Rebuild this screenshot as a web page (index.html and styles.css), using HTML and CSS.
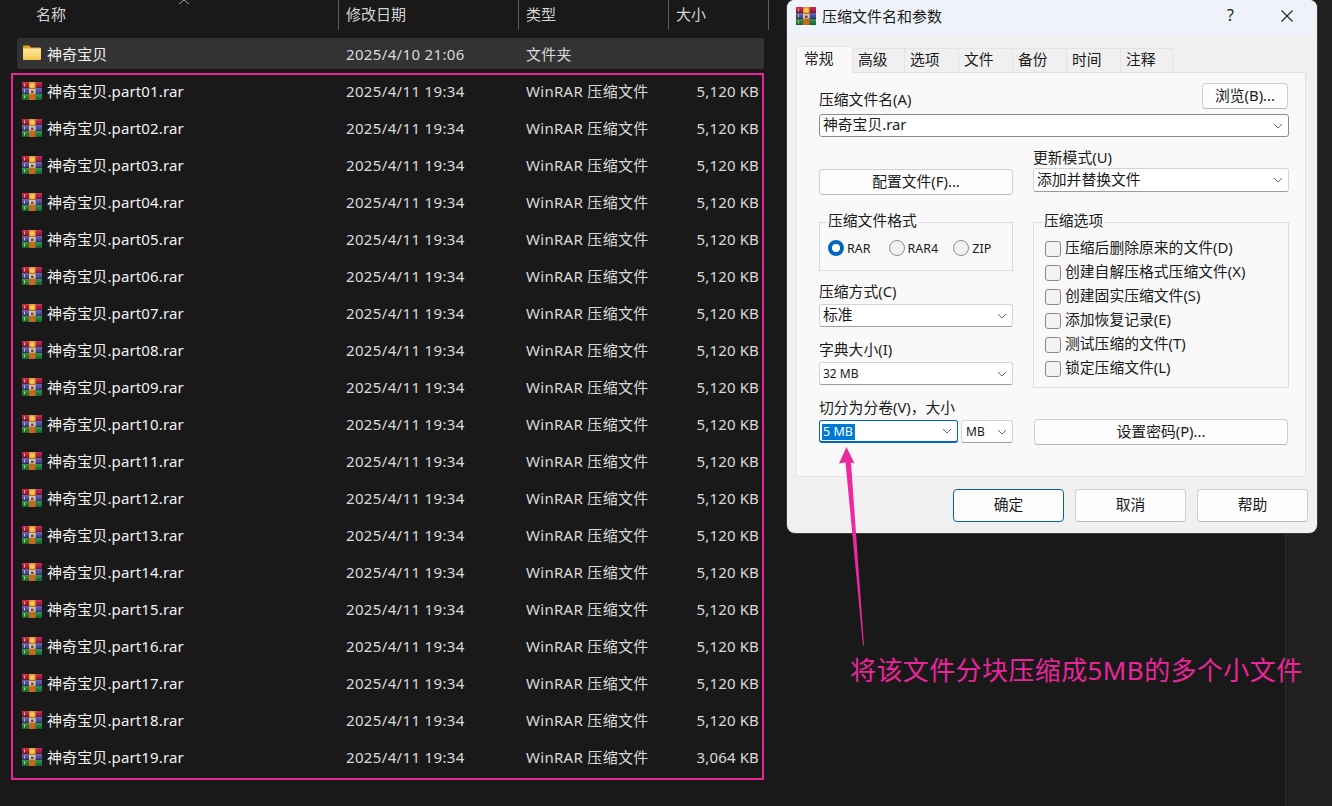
FILE: index.html
```html
<!DOCTYPE html>
<html lang="zh-CN">
<head>
    <meta charset="UTF-8">
    <title>压缩文件名和参数</title>
    <link rel="stylesheet" href="styles.css">
</head>
<body>

<svg class="defs" width="0" height="0">
    <defs>
        <linearGradient id="redBook" x1="0" y1="0" x2="0" y2="1"><stop offset="0" stop-color="#cf2c5a"/><stop offset="1" stop-color="#8a1638"/></linearGradient>
        <linearGradient id="blueBook" x1="0" y1="0" x2="0" y2="1"><stop offset="0" stop-color="#6664bc"/><stop offset="1" stop-color="#3c3a8c"/></linearGradient>
        <linearGradient id="greenBook" x1="0" y1="0" x2="0" y2="1"><stop offset="0" stop-color="#2f9a52"/><stop offset="1" stop-color="#13602e"/></linearGradient>
        <linearGradient id="folderBody" x1="0" y1="0" x2="0" y2="1"><stop offset="0" stop-color="#ffe9a6"/><stop offset="1" stop-color="#f7c64c"/></linearGradient>
        <symbol id="rar" viewBox="0 0 20 18">
            <rect x="0" y="0" width="20" height="18" fill="#222"/>
            <rect x="0" y="0" width="20" height="5.6" fill="url(#redBook)"/>
            <rect x="0" y="6" width="20" height="5.6" fill="url(#blueBook)"/>
            <rect x="0" y="12" width="20" height="6" fill="url(#greenBook)"/>
            <rect x="2" y="1.5" width="1" height="3" fill="#f2c230"/>
            <rect x="2" y="7.5" width="1" height="3" fill="#f2c230"/>
            <rect x="2" y="13.5" width="1" height="3" fill="#f2c230"/>
            <rect x="7" y="0" width="6.5" height="18" fill="#c8681e"/>
            <rect x="7" y="0" width="6.5" height="6" fill="#e09a28"/>
            <circle cx="10.2" cy="3.4" r="2.3" fill="#f6c860"/>
            <rect x="7" y="7" width="6.5" height="4.6" fill="#cfc8ba"/>
            <rect x="9" y="8.6" width="2.6" height="2.4" fill="#5a5048"/>
        </symbol>
        <symbol id="folder" viewBox="0 0 18 15">
            <path d="M0 1.5a1 1 0 0 1 1-1h5l2 2h9a1 1 0 0 1 1 1V4H0z" fill="#e5a21e"/>
            <path d="M0 3.6h17a1 1 0 0 1 1 1v9.4a1 1 0 0 1-1 1H1a1 1 0 0 1-1-1z" fill="url(#folderBody)"/>
        </symbol>
        <symbol id="chev" viewBox="0 0 10 6">
            <path d="M1 1l4 4 4-4" fill="none" stroke="#666" stroke-width="1"/>
        </symbol>
    </defs>
</svg>

<div class="desktop">
    <div class="explorer">
        <div class="col-head">
            <div class="col col-name">名称</div>
            <div class="col col-date">修改日期</div>
            <div class="col col-type">类型</div>
            <div class="col col-size">大小</div>
        </div>
        <svg class="sort-caret" width="12" height="5" viewBox="0 0 12 5"><path d="M1 5l5-4 5 4" fill="none" stroke="#9a9a9a"/></svg>

        <div class="row row-folder">
            <div class="name"><svg class="folder-icon"><use href="#folder"/></svg>神奇宝贝</div>
            <div>2025/4/10 21:06</div>
            <div>文件夹</div>
            <div></div>
        </div>

        <div class="files">
            <div class="row"><div class="name"><svg class="rar-icon"><use href="#rar"/></svg>神奇宝贝.part01.rar</div><div>2025/4/11 19:34</div><div>WinRAR 压缩文件</div><div>5,120 KB</div></div>
            <div class="row"><div class="name"><svg class="rar-icon"><use href="#rar"/></svg>神奇宝贝.part02.rar</div><div>2025/4/11 19:34</div><div>WinRAR 压缩文件</div><div>5,120 KB</div></div>
            <div class="row"><div class="name"><svg class="rar-icon"><use href="#rar"/></svg>神奇宝贝.part03.rar</div><div>2025/4/11 19:34</div><div>WinRAR 压缩文件</div><div>5,120 KB</div></div>
            <div class="row"><div class="name"><svg class="rar-icon"><use href="#rar"/></svg>神奇宝贝.part04.rar</div><div>2025/4/11 19:34</div><div>WinRAR 压缩文件</div><div>5,120 KB</div></div>
            <div class="row"><div class="name"><svg class="rar-icon"><use href="#rar"/></svg>神奇宝贝.part05.rar</div><div>2025/4/11 19:34</div><div>WinRAR 压缩文件</div><div>5,120 KB</div></div>
            <div class="row"><div class="name"><svg class="rar-icon"><use href="#rar"/></svg>神奇宝贝.part06.rar</div><div>2025/4/11 19:34</div><div>WinRAR 压缩文件</div><div>5,120 KB</div></div>
            <div class="row"><div class="name"><svg class="rar-icon"><use href="#rar"/></svg>神奇宝贝.part07.rar</div><div>2025/4/11 19:34</div><div>WinRAR 压缩文件</div><div>5,120 KB</div></div>
            <div class="row"><div class="name"><svg class="rar-icon"><use href="#rar"/></svg>神奇宝贝.part08.rar</div><div>2025/4/11 19:34</div><div>WinRAR 压缩文件</div><div>5,120 KB</div></div>
            <div class="row"><div class="name"><svg class="rar-icon"><use href="#rar"/></svg>神奇宝贝.part09.rar</div><div>2025/4/11 19:34</div><div>WinRAR 压缩文件</div><div>5,120 KB</div></div>
            <div class="row"><div class="name"><svg class="rar-icon"><use href="#rar"/></svg>神奇宝贝.part10.rar</div><div>2025/4/11 19:34</div><div>WinRAR 压缩文件</div><div>5,120 KB</div></div>
            <div class="row"><div class="name"><svg class="rar-icon"><use href="#rar"/></svg>神奇宝贝.part11.rar</div><div>2025/4/11 19:34</div><div>WinRAR 压缩文件</div><div>5,120 KB</div></div>
            <div class="row"><div class="name"><svg class="rar-icon"><use href="#rar"/></svg>神奇宝贝.part12.rar</div><div>2025/4/11 19:34</div><div>WinRAR 压缩文件</div><div>5,120 KB</div></div>
            <div class="row"><div class="name"><svg class="rar-icon"><use href="#rar"/></svg>神奇宝贝.part13.rar</div><div>2025/4/11 19:34</div><div>WinRAR 压缩文件</div><div>5,120 KB</div></div>
            <div class="row"><div class="name"><svg class="rar-icon"><use href="#rar"/></svg>神奇宝贝.part14.rar</div><div>2025/4/11 19:34</div><div>WinRAR 压缩文件</div><div>5,120 KB</div></div>
            <div class="row"><div class="name"><svg class="rar-icon"><use href="#rar"/></svg>神奇宝贝.part15.rar</div><div>2025/4/11 19:34</div><div>WinRAR 压缩文件</div><div>5,120 KB</div></div>
            <div class="row"><div class="name"><svg class="rar-icon"><use href="#rar"/></svg>神奇宝贝.part16.rar</div><div>2025/4/11 19:34</div><div>WinRAR 压缩文件</div><div>5,120 KB</div></div>
            <div class="row"><div class="name"><svg class="rar-icon"><use href="#rar"/></svg>神奇宝贝.part17.rar</div><div>2025/4/11 19:34</div><div>WinRAR 压缩文件</div><div>5,120 KB</div></div>
            <div class="row"><div class="name"><svg class="rar-icon"><use href="#rar"/></svg>神奇宝贝.part18.rar</div><div>2025/4/11 19:34</div><div>WinRAR 压缩文件</div><div>5,120 KB</div></div>
            <div class="row"><div class="name"><svg class="rar-icon"><use href="#rar"/></svg>神奇宝贝.part19.rar</div><div>2025/4/11 19:34</div><div>WinRAR 压缩文件</div><div>3,064 KB</div></div>
        </div>
    </div>
    <div class="side-strip"></div>
</div>

<div class="dialog">
    <div class="title-bar">
        <svg class="title-icon"><use href="#rar"/></svg>
        <span class="title-text">压缩文件名和参数</span>
        <span class="help">?</span>
        <svg class="close" width="12" height="12" viewBox="0 0 12 12"><path d="M0.5 0.5l11 11M11.5 0.5l-11 11" stroke="#222" stroke-width="1.1"/></svg>
    </div>

    <div class="tabs">
        <div class="tab active">常规</div>
        <div class="tab">高级</div>
        <div class="tab">选项</div>
        <div class="tab">文件</div>
        <div class="tab">备份</div>
        <div class="tab">时间</div>
        <div class="tab">注释</div>
    </div>

    <div class="panel">
        <div class="name-head">
            <label class="name-label">压缩文件名(A)</label>
            <button class="btn btn-browse">浏览(B)...</button>
        </div>
        <div class="combo combo-edit"><span>神奇宝贝.rar</span><svg class="chev"><use href="#chev"/></svg></div>

        <div class="columns">
            <div class="col-left">
                <button class="btn btn-profile">配置文件(F)...</button>
                <fieldset class="group group-format">
                    <legend>压缩文件格式</legend>
                    <div class="radios">
                        <span class="radio-item item-rar"><i class="radio checked"></i>RAR</span>
                        <span class="radio-item item-rar4"><i class="radio"></i>RAR4</span>
                        <span class="radio-item"><i class="radio"></i>ZIP</span>
                    </div>
                </fieldset>
                <label class="field-label label-method">压缩方式(C)</label>
                <div class="combo"><span>标准</span><svg class="chev"><use href="#chev"/></svg></div>
                <label class="field-label label-dict">字典大小(I)</label>
                <div class="combo combo-small"><span>32 MB</span><svg class="chev"><use href="#chev"/></svg></div>
                <label class="field-label label-split">切分为分卷(V)，大小</label>
                <div class="split-row">
                    <div class="combo combo-focus"><span class="selected">5 MB</span><svg class="chev"><use href="#chev"/></svg></div>
                    <div class="combo combo-small combo-unit"><span>MB</span><svg class="chev"><use href="#chev"/></svg></div>
                </div>
            </div>
            <div class="col-right">
                <label class="field-label label-update">更新模式(U)</label>
                <div class="combo combo-update"><span>添加并替换文件</span><svg class="chev"><use href="#chev"/></svg></div>
                <fieldset class="group group-options">
                    <legend>压缩选项</legend>
                    <div class="check-item"><i class="check"></i>压缩后删除原来的文件(D)</div>
                    <div class="check-item"><i class="check"></i>创建自解压格式压缩文件(X)</div>
                    <div class="check-item"><i class="check"></i>创建固实压缩文件(S)</div>
                    <div class="check-item"><i class="check"></i>添加恢复记录(E)</div>
                    <div class="check-item"><i class="check"></i>测试压缩的文件(T)</div>
                    <div class="check-item"><i class="check"></i>锁定压缩文件(L)</div>
                </fieldset>
                <button class="btn btn-password">设置密码(P)...</button>
            </div>
        </div>
    </div>

    <div class="footer">
        <button class="btn btn-foot btn-default">确定</button>
        <button class="btn btn-foot">取消</button>
        <button class="btn btn-foot">帮助</button>
    </div>
</div>

<!-- annotations drawn on top of the screenshot -->
<div class="highlight"></div>
<svg class="arrow" width="40" height="210" viewBox="830 440 40 210">
    <path d="M846.5 447L854.5 463.5L851 462.5L864 645.5L863 645.5L845.5 462.5L839 463.5Z" fill="#ea2a9e"/>
</svg>
<div class="note">将该文件分块压缩成5MB的多个小文件</div>

</body>
</html>
```

FILE: styles.css
```css
* {
    box-sizing: border-box;
}
html, body {
    margin: 0;
    height: 100%;
}
body {
    position: relative;
    width: 1332px;
    height: 806px;
    overflow: hidden;
    background: #191919;
    font-family: "Noto Sans", "Noto Sans CJK SC", sans-serif;
    font-size: 15px;
    color: #1a1a1a;
}
.defs {
    position: absolute;
}
.desktop {
    display: flex;
    height: 806px;
}
.explorer {
    width: 1285px;
}
.side-strip {
    flex: 1;
    background: #202020;
    border-left: 1px solid #2c2c2c;
}

/* file list */
.col-head {
    display: flex;
    height: 30px;
    color: #d4d4d4;
}
.col {
    padding-left: 7px;
    line-height: 28px;
    border-right: 1px solid #5c5c5c;
}
.col-name {
    width: 339px;
    padding-left: 36px;
}
.col-date {
    width: 180px;
}
.col-type {
    width: 150px;
}
.col-size {
    width: 100px;
}
.sort-caret {
    position: absolute;
    left: 178px;
    top: -1px;
}
.row {
    display: grid;
    grid-template-columns: 329px 180px 1fr auto;
    align-items: center;
    width: 747px;
    height: 37px;
    margin-left: 17px;
    padding-right: 5px;
    color: #d9d9d9;
}
.row > div:nth-child(2) {
    letter-spacing: 0.35px;
}
.row > div:nth-child(3) {
    letter-spacing: 0.3px;
}
.row > div:nth-child(4) {
    letter-spacing: 0.15px;
}
.row-folder {
    height: 31px;
    margin-top: 8px;
    background: #333;
    border-radius: 3px;
}
.name {
    display: flex;
    align-items: center;
    padding-left: 5px;
    letter-spacing: 0.12px;
    color: #f2f2f2;
}
.rar-icon {
    width: 20px;
    height: 18px;
    margin-right: 5px;
}
.folder-icon {
    width: 18px;
    height: 15px;
    margin: 0 6px 2px 1px;
}
.files {
    margin-top: 3px;
}

/* winrar dialog */
.dialog {
    position: absolute;
    left: 787px;
    top: 0;
    width: 530px;
    height: 533px;
    background: #f0f0f0;
    border-radius: 8px;
    overflow: hidden;
    box-shadow: 0 0 0 1px #3a3a3a;
    font-size: 14.8px;
}
.title-bar {
    display: flex;
    align-items: center;
    height: 35px;
    padding: 0 24px 3px 9px;
    background: #eff3f9;
    font-size: 15px;
}
.title-icon {
    width: 20px;
    height: 18px;
    margin-right: 6px;
}
.title-text {
    flex: 1;
    padding-bottom: 2px;
}
.help {
    margin-right: 47px;
    padding-bottom: 2px;
    font-size: 16px;
}
.tabs {
    display: flex;
    align-items: flex-end;
    height: 37px;
    padding-left: 9px;
}
.tab {
    width: 54px;
    height: 24px;
    padding-left: 5px;
    line-height: 20px;
    background: #f0f0f0;
    border: 1px solid #e3e3e3;
    border-bottom: 0;
    border-left: 0;
}
.tab:nth-child(2), .tab:last-child {
    width: 52px;
}
.tab.active {
    position: relative;
    width: 57px;
    height: 27px;
    margin-bottom: -1px;
    padding-left: 7px;
    line-height: 22px;
    background: #f9f9f9;
    border-left: 1px solid #e3e3e3;
}
.panel {
    width: 510px;
    height: 405px;
    margin-left: 9px;
    padding: 10px 16px 0 22px;
    background: #f9f9f9;
    border: 1px solid #e3e3e3;
}
.name-head {
    display: flex;
    justify-content: space-between;
    align-items: flex-end;
    height: 26px;
    padding-right: 1px;
}
.name-label {
    line-height: 20px;
}
.btn {
    height: 26px;
    padding: 0 0 5px;
    font: inherit;
    color: #1a1a1a;
    background: #fdfdfd;
    border: 1px solid #d0d0d0;
    border-bottom-color: #b8b8b8;
    border-radius: 4px;
}
.btn-browse {
    width: 86px;
}
.combo {
    display: flex;
    align-items: center;
    justify-content: space-between;
    height: 23px;
    padding: 0 5px 0 3px;
    background: #fff;
    border: 1px solid #d4d4d4;
    border-bottom-color: #9c9c9c;
    border-radius: 3px;
}
.combo span {
    margin-bottom: 4px;
}
.combo-small span {
    margin-bottom: 1px;
    font-size: 12px;
}
.combo-update {
    height: 24px;
}
.combo-edit {
    margin-top: 5px;
    border-color: #8a8a8a;
}
.chev {
    width: 10px;
    height: 6px;
}
.columns {
    display: grid;
    grid-template-columns: 194px 256px;
    column-gap: 20px;
}
.col-left, .col-right {
    display: flex;
    flex-direction: column;
}
.field-label {
    line-height: 20px;
}
.btn-profile {
    margin-top: 32px;
}
.group {
    margin: 0;
    padding: 0;
    border: 1px solid #dcdcdc;
    min-width: 0;
}
.group legend {
    margin-left: 7px;
    padding: 0 1px 5px;
    line-height: 18px;
}
.group-format {
    height: 60px;
    margin-top: 16px;
}
.radios {
    display: flex;
    padding: 4px 0 0 8px;
    font-size: 12.5px;
}
.radio-item {
    display: flex;
    align-items: center;
    gap: 3px;
    height: 20px;
}
.item-rar {
    margin-right: 18px;
}
.item-rar4 {
    margin-right: 15px;
}
.radio {
    width: 16px;
    height: 16px;
    border-radius: 50%;
    background: #f3f3f3;
    border: 1px solid #8a8a8a;
}
.radio.checked {
    background: #fff;
    border: 4.5px solid #0067c0;
}
.label-method {
    margin-top: 10px;
    margin-bottom: 3px;
}
.label-dict {
    margin-top: 12px;
    margin-bottom: 3px;
}
.label-split {
    margin-top: 12px;
    margin-bottom: 3px;
}
.split-row {
    display: flex;
    gap: 3px;
}
.combo-focus {
    width: 139px;
    padding-left: 2px;
    border: 1px solid #0067c0;
    border-bottom-width: 2px;
}
.combo-unit {
    flex: 1;
    padding-left: 4px;
}
.combo .selected {
    width: 33px;
    height: 16px;
    margin: 1px 0 0;
    padding-left: 1px;
    line-height: 16px;
    font-size: 12.5px;
    color: #fff;
    background: #0078d4;
}
.label-update {
    margin-top: 10px;
    margin-bottom: 1px;
}
.group-options {
    height: 177px;
    margin-top: 19px;
    padding: 3px 0 0 11px;
}
.group-options legend {
    margin-left: -2px;
}
.check-item {
    display: flex;
    align-items: center;
    gap: 4px;
    height: 24px;
    padding-bottom: 4px;
    line-height: 20px;
}
.check {
    width: 16px;
    height: 16px;
    margin-top: 4px;
    background: #f3f3f3;
    border: 1px solid #8a8a8a;
    border-radius: 3px;
}
.btn-password {
    width: 254px;
    margin-top: 31px;
    margin-left: 1px;
}
.footer {
    display: flex;
    justify-content: flex-end;
    gap: 11px;
    padding: 12px 9px 0 0;
}
.btn-foot {
    width: 111px;
    height: 33px;
}
.btn-default {
    border: 1px solid #0f5f9e;
}

/* annotations */
.highlight {
    position: absolute;
    left: 11px;
    top: 73px;
    width: 753px;
    height: 707px;
    border: 2px solid #e8269a;
}
.arrow {
    position: absolute;
    left: 830px;
    top: 440px;
}
.note {
    position: absolute;
    left: 850px;
    top: 651px;
    line-height: 38px;
    font-size: 26px;
    letter-spacing: 0.4px;
    color: #e8269a;
    white-space: nowrap;
}
```
